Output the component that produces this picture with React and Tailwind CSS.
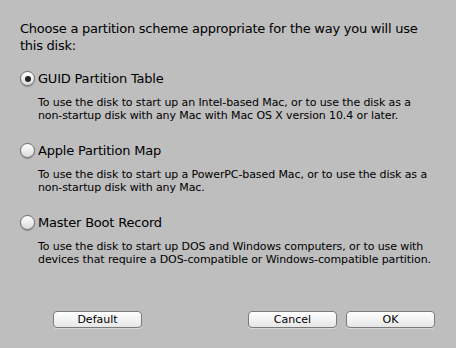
import React from 'react';

const options = [
  {
    id: 'gpt',
    label: 'GUID Partition Table',
    lines: [
      'To use the disk to start up an Intel-based Mac, or to use the disk as a',
      'non-startup disk with any Mac with Mac OS X version 10.4 or later.',
    ],
  },
  {
    id: 'apm',
    label: 'Apple Partition Map',
    lines: [
      'To use the disk to start up a PowerPC-based Mac, or to use the disk as a',
      'non-startup disk with any Mac.',
    ],
  },
  {
    id: 'mbr',
    label: 'Master Boot Record',
    lines: [
      'To use the disk to start up DOS and Windows computers, or to use with',
      'devices that require a DOS-compatible or Windows-compatible partition.',
    ],
  },
];

function Radio({ checked }) {
  return (
    <span className="relative flex h-[15px] w-[15px] shrink-0 items-center justify-center rounded-full border border-[#6f6f6f] bg-gradient-to-b from-[#ffffff] to-[#dcdcdc] shadow-[0_1px_1px_rgba(0,0,0,0.25)]">
      {checked && <span className="h-[6px] w-[6px] rounded-full bg-[#222]" />}
    </span>
  );
}

function Button({ children, className = '' }) {
  return (
    <button className={`flex h-[17px] w-[89px] items-center justify-center rounded-[4px] border border-[#7a7a7a] bg-gradient-to-b from-[#ffffff] via-[#f3f3f3] to-[#e6e6e6] text-[11px] leading-none text-black shadow-[0_1px_0_rgba(255,255,255,0.4)] ${className}`}>
      {children}
    </button>
  );
}

export default function App() {
  const selected = 'gpt';
  return (
    <div className="flex h-[348px] w-[456px] flex-col bg-[#bebebe] font-['DejaVu_Sans',sans-serif] text-black">
      <div className="px-[20px] pt-[20px] text-[13px] leading-[17px] tracking-[-0.25px] whitespace-nowrap">
        Choose a partition scheme appropriate for the way you will use
        <br />
        this disk:
      </div>

      <div className="mt-[16px] flex flex-col gap-[20px] pl-[20px]">
        {options.map((o) => (
          <div key={o.id}>
            <div className="flex items-center gap-[3px]">
              <Radio checked={o.id === selected} />
              <span className="text-[13px] leading-[17px] tracking-[-0.2px]">{o.label}</span>
            </div>
            <div className="mt-[9px] pl-[18px] text-[11px] leading-[13px] tracking-[-0.1px] whitespace-nowrap">
              {o.lines.map((l) => (
                <div key={l}>{l}</div>
              ))}
            </div>
          </div>
        ))}
      </div>

      <div className="mt-auto mb-[20px] flex items-center pl-[53px] pr-[21px]">
        <Button>Default</Button>
        <div className="flex-1" />
        <Button>Cancel</Button>
        <Button className="ml-[9px]">OK</Button>
      </div>
    </div>
  );
}
